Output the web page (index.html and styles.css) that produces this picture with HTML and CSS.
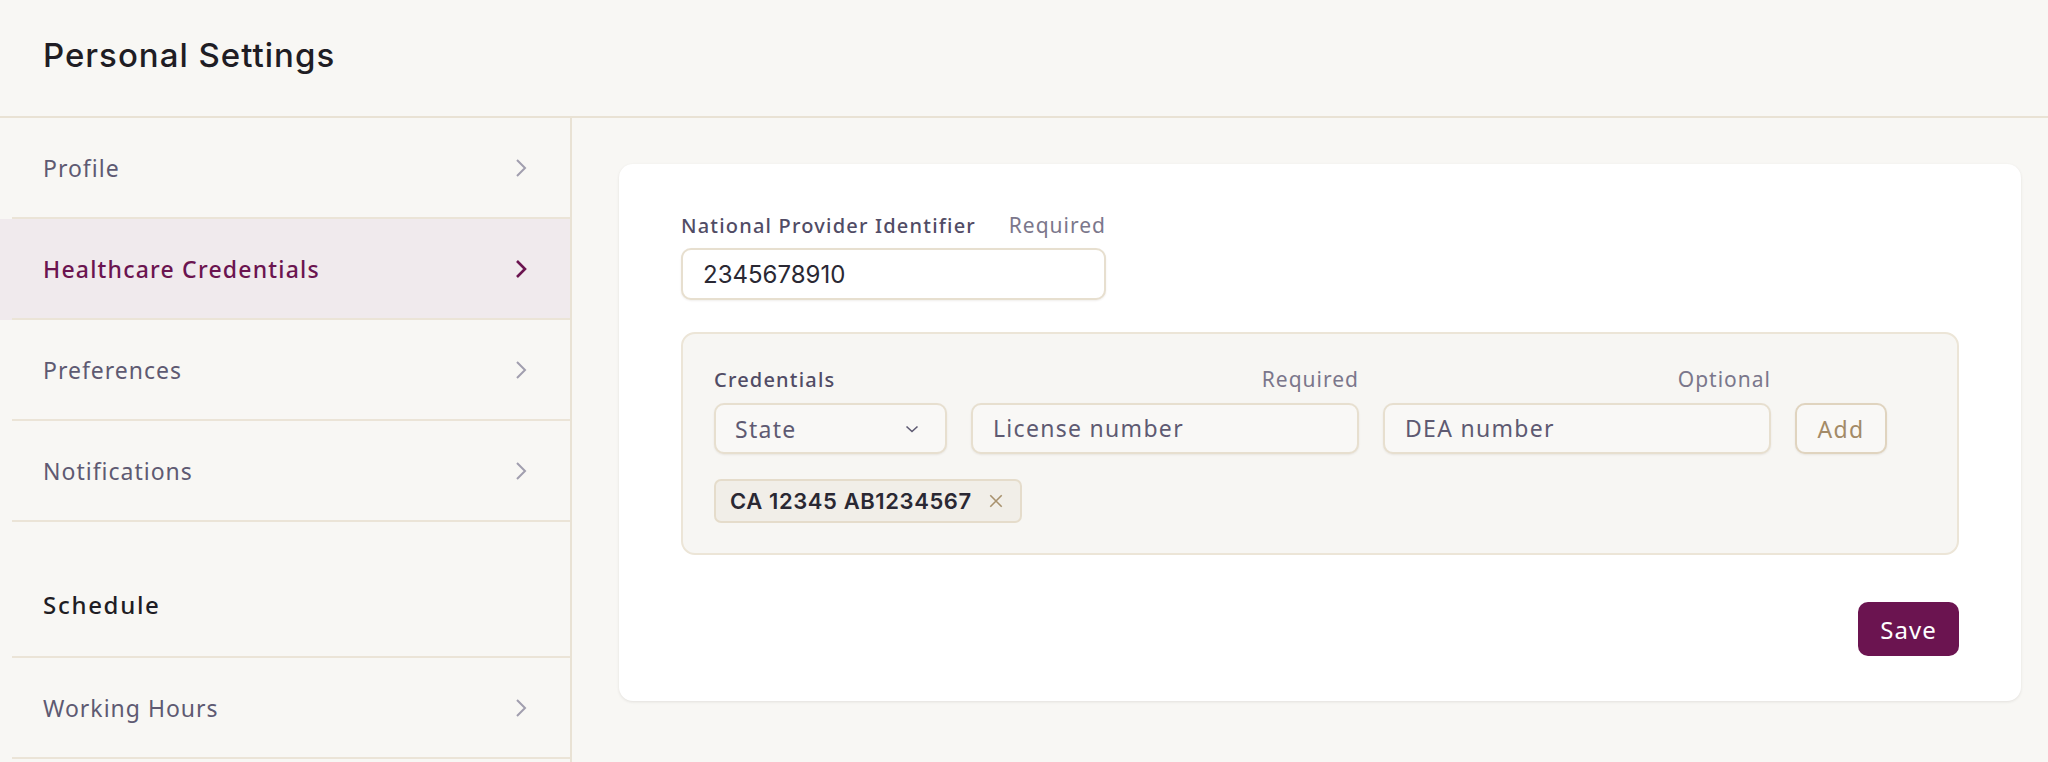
FILE: index.html
```html
<!DOCTYPE html>
<html lang="en">
<head>
    <meta charset="UTF-8">
    <meta name="viewport" content="width=device-width, initial-scale=1.0">
    <title>Personal Settings</title>
    <link rel="stylesheet" href="styles.css">
</head>
<body>
    <header class="page-header">
        <h1>Personal Settings</h1>
    </header>

    <div class="layout">
        <nav class="sidebar">
            <a class="nav-item" href="#">
                <span>Profile</span>
                <svg class="chevron" viewBox="0 0 12 20"><path d="M2 2l8 8-8 8"/></svg>
            </a>
            <a class="nav-item active" href="#">
                <span>Healthcare Credentials</span>
                <svg class="chevron" viewBox="0 0 12 20"><path d="M2 2l8 8-8 8"/></svg>
            </a>
            <a class="nav-item" href="#">
                <span>Preferences</span>
                <svg class="chevron" viewBox="0 0 12 20"><path d="M2 2l8 8-8 8"/></svg>
            </a>
            <a class="nav-item" href="#">
                <span>Notifications</span>
                <svg class="chevron" viewBox="0 0 12 20"><path d="M2 2l8 8-8 8"/></svg>
            </a>
            <div class="nav-section">Schedule</div>
            <a class="nav-item" href="#">
                <span>Working Hours</span>
                <svg class="chevron" viewBox="0 0 12 20"><path d="M2 2l8 8-8 8"/></svg>
            </a>
        </nav>

        <main class="content">
            <div class="card">
                <div class="field npi">
                    <div class="field-label">
                        <label>National Provider Identifier</label>
                        <span class="hint">Required</span>
                    </div>
                    <input class="text-input" type="text" value="2345678910">
                </div>

                <div class="credentials">
                    <div class="cred-grid">
                        <label class="cred-title">Credentials</label>
                        <span class="hint right">Required</span>
                        <span class="hint right">Optional</span>
                        <span></span>

                        <div class="select">
                            <span>State</span>
                            <svg class="caret" viewBox="0 0 14 8"><path d="M1.5 1.5l5.5 5 5.5-5"/></svg>
                        </div>
                        <input class="text-input" type="text" placeholder="License number">
                        <input class="text-input" type="text" placeholder="DEA number">
                        <button class="btn-add">Add</button>
                    </div>

                    <div class="chips">
                        <span class="chip">
                            CA 12345 AB1234567
                            <svg class="chip-remove" viewBox="0 0 14 14"><path d="M2 2l10 10M12 2L2 12"/></svg>
                        </span>
                    </div>
                </div>

                <div class="actions">
                    <button class="btn-save">Save</button>
                </div>
            </div>
        </main>
    </div>
</body>
</html>
```

FILE: styles.css
```css
body {
    margin: 0;
    padding: 0;
    background: #f8f7f4;
    font-family: 'Inter', 'Noto Sans', sans-serif;
    color: #1f1d24;
}

.page-header {
    height: 110px;
    display: flex;
    align-items: center;
    padding: 0 0 6px 43px;
    border-bottom: 2px solid #e9e2d4;
}

.page-header h1 {
    margin: 0;
    font-size: 33px;
    font-weight: 500;
    color: #1f1d24;
    letter-spacing: 1px;
}

.layout {
    display: flex;
    height: 644px;
}

/* left menu */
.sidebar {
    width: 570px;
    flex-shrink: 0;
    border-right: 2px solid #e9e2d4;
    display: flex;
    flex-direction: column;
}

.nav-item,
.nav-section {
    display: flex;
    align-items: center;
    justify-content: space-between;
    padding: 0 43px;
    font-family: 'Noto Sans', sans-serif;
    font-size: 23px;
    letter-spacing: 1px;
    text-decoration: none;
    color: #5e5a72;
    /* divider is inset from the left edge */
    background: linear-gradient(#ebe4d7, #ebe4d7) no-repeat 12px 100% / calc(100% - 12px) 2px;
}

.nav-item {
    height: 101px;
    box-sizing: border-box;
    padding-bottom: 2px;
}

.nav-item.active {
    background-color: #f0eaed;
    color: #6b1450;
    font-weight: 500;
    letter-spacing: 1.2px;
}

.chevron {
    width: 12px;
    height: 20px;
    fill: none;
    stroke: #a19eae;
    stroke-width: 2;
}

.nav-item.active .chevron {
    stroke: #6b1450;
    stroke-width: 2.6;
}

.nav-section {
    height: 136px;
    box-sizing: border-box;
    padding-top: 28px;
    font-size: 24px;
    letter-spacing: 1.7px;
    font-weight: 500;
    color: #1f1d24;
}

/* main panel */
.content {
    flex: 1;
    padding: 46px 27px 0 47px;
}

.card {
    background: #fff;
    border-radius: 14px;
    box-shadow: 0 1px 3px rgba(40, 30, 20, 0.1);
    padding: 47px 62px 45px 62px;
}

.field {
    width: 425px;
}

.field-label {
    display: flex;
    justify-content: space-between;
    align-items: center;
    height: 28px;
    margin-bottom: 9px;
}

.field-label label,
.cred-title {
    font-family: 'Noto Sans', sans-serif;
    font-size: 20px;
    font-weight: 500;
    letter-spacing: 1.2px;
    color: #514c65;
}

.hint {
    font-family: 'Noto Sans', sans-serif;
    font-size: 21px;
    letter-spacing: 1px;
    color: #7b778b;
}

.hint.right {
    text-align: right;
}

.text-input {
    box-sizing: border-box;
    width: 100%;
    height: 52px;
    padding: 0 20px;
    border: 2px solid #e7dfcf;
    border-radius: 10px;
    background: #fff;
    box-shadow: 0 1px 2px rgba(60, 40, 10, 0.08);
    font-family: 'Inter', sans-serif;
    font-size: 24px;
    color: #2a2833;
    outline: none;
}

.text-input::placeholder {
    font-family: 'Noto Sans', sans-serif;
    font-size: 23px;
    letter-spacing: 1.3px;
    color: #5e5a72;
    opacity: 1;
}

.credentials {
    margin-top: 32px;
    padding: 32px 31px 30px;
    background: #f7f6f3;
    border: 2px solid #ece5d7;
    border-radius: 14px;
}

.cred-grid {
    display: grid;
    grid-template-columns: 233px 388px 388px 92px;
    grid-template-rows: 26px 51px;
    column-gap: 24px;
    row-gap: 11px;
    align-items: center;
}

.cred-grid .text-input {
    height: 51px;
    background: #f9f8f6;
}

.select {
    box-sizing: border-box;
    height: 51px;
    display: flex;
    align-items: center;
    justify-content: space-between;
    padding: 0 26px 0 19px;
    border: 2px solid #e7dfcf;
    border-radius: 10px;
    background: #f9f8f6;
    box-shadow: 0 1px 2px rgba(60, 40, 10, 0.08);
    font-family: 'Noto Sans', sans-serif;
    font-size: 23px;
    letter-spacing: 1.3px;
    color: #5e5a72;
}

.caret {
    width: 14px;
    height: 8px;
    fill: none;
    stroke: #5e5a72;
    stroke-width: 1.6;
}

.btn-add {
    height: 51px;
    width: 92px;
    border: 2px solid #e0d4bf;
    border-radius: 10px;
    background: #f9f8f6;
    box-shadow: 0 1px 2px rgba(60, 40, 10, 0.08);
    font-family: 'Noto Sans', sans-serif;
    font-size: 23px;
    letter-spacing: 1.3px;
    color: #a38a67;
    cursor: pointer;
}

.chips {
    display: flex;
    margin-top: 25px;
}

.chip {
    display: inline-flex;
    align-items: center;
    gap: 16px;
    height: 44px;
    box-sizing: border-box;
    padding: 0 16px 0 14px;
    background: #f1eee8;
    border: 2px solid #e5dccb;
    border-radius: 7px;
    font-family: 'Inter', sans-serif;
    font-size: 22px;
    font-weight: 600;
    letter-spacing: 0.6px;
    color: #2a2833;
}

.chip-remove {
    width: 16px;
    height: 16px;
    fill: none;
    stroke: #a8916d;
    stroke-width: 1.4;
}

.actions {
    display: flex;
    justify-content: flex-end;
    margin-top: 47px;
}

.btn-save {
    width: 101px;
    height: 54px;
    border: none;
    border-radius: 10px;
    background: #6b1450;
    color: #fff;
    font-family: 'Noto Sans', sans-serif;
    font-size: 24px;
    letter-spacing: 1px;
    cursor: pointer;
}
```
